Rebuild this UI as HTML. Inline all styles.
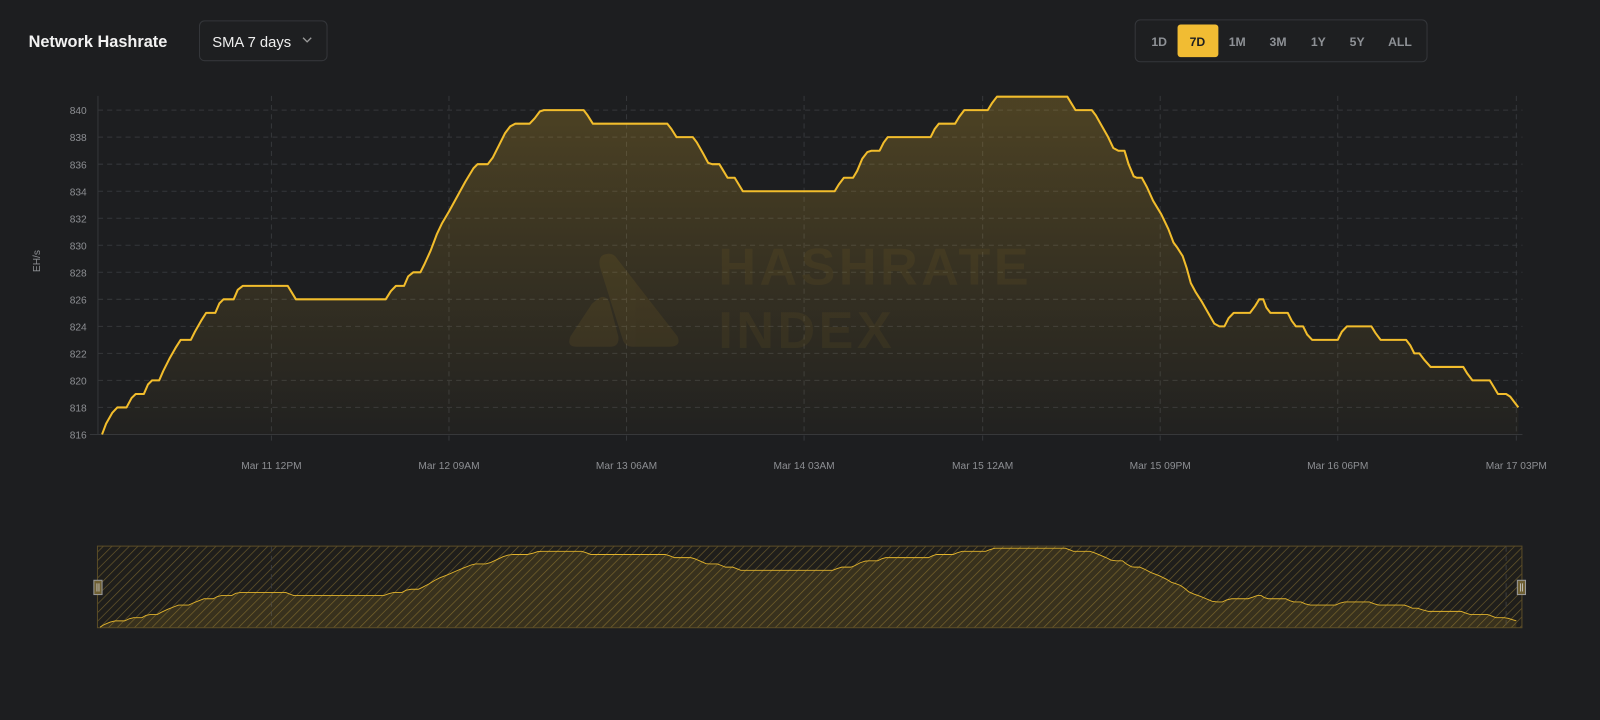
<!DOCTYPE html>
<html><head><meta charset="utf-8"><style>
html,body{margin:0;padding:0;background:#1d1e20;width:1600px;height:720px;overflow:hidden}
svg{display:block;font-family:"Liberation Sans",sans-serif}
</style></head><body>
<svg width="1600" height="720" viewBox="0 0 1568 706" preserveAspectRatio="none" xmlns="http://www.w3.org/2000/svg">
<defs>
<linearGradient id="g" x1="0" y1="108" x2="0" y2="426" gradientUnits="userSpaceOnUse">
<stop offset="0" stop-color="#f0bd2f" stop-opacity="0.22"/>
<stop offset="1" stop-color="#f0bd2f" stop-opacity="0.02"/>
</linearGradient>
<pattern id="h" width="6" height="6" patternUnits="userSpaceOnUse" patternTransform="rotate(45)">
<rect width="6" height="6" fill="#1f1e1b"/>
<line x1="0" y1="0" x2="0" y2="6" stroke="#6b5a2c" stroke-width="1.3"/>
</pattern>
</defs>

<text x="28" y="46" font-size="16" font-weight="bold" fill="#f2f2f2">Network Hashrate</text>
<rect x="195.5" y="20.5" width="125" height="39" rx="5" fill="#1e1f21" stroke="#34363a"/>
<text x="208" y="46" font-size="14.5" fill="#eeeeee">SMA 7 days</text>
<path d="M297 37 L301 41 L305 37" fill="none" stroke="#9a9a9a" stroke-width="1.3"/>

<rect x="1112.5" y="19.5" width="286" height="41" rx="5" fill="#1e1f21" stroke="#34363a"/>
<rect x="1154" y="24" width="40" height="32" rx="3" fill="#f1bc33"/>
<g font-size="12" font-weight="bold" fill="#8e9196" text-anchor="middle">
<text x="1136" y="45">1D</text>
<text x="1173.5" y="45" fill="#1d1e20">7D</text>
<text x="1212.5" y="45">1M</text>
<text x="1252.5" y="45">3M</text>
<text x="1292" y="45">1Y</text>
<text x="1330" y="45">5Y</text>
<text x="1372" y="45">ALL</text>
</g>

<g stroke="#35373a" stroke-width="1" stroke-dasharray="5,4">
<line x1="96" y1="108" x2="1492" y2="108"/><line x1="96" y1="134.5" x2="1492" y2="134.5"/>
<line x1="96" y1="161" x2="1492" y2="161"/><line x1="96" y1="187.5" x2="1492" y2="187.5"/>
<line x1="96" y1="214" x2="1492" y2="214"/><line x1="96" y1="240.5" x2="1492" y2="240.5"/>
<line x1="96" y1="267" x2="1492" y2="267"/><line x1="96" y1="293.5" x2="1492" y2="293.5"/>
<line x1="96" y1="320" x2="1492" y2="320"/><line x1="96" y1="346.5" x2="1492" y2="346.5"/>
<line x1="96" y1="373" x2="1492" y2="373"/><line x1="96" y1="399.5" x2="1492" y2="399.5"/>
<line x1="266" y1="94" x2="266" y2="434"/><line x1="440" y1="94" x2="440" y2="434"/>
<line x1="614" y1="94" x2="614" y2="434"/><line x1="788" y1="94" x2="788" y2="434"/>
<line x1="963" y1="94" x2="963" y2="434"/><line x1="1137" y1="94" x2="1137" y2="434"/>
<line x1="1311" y1="94" x2="1311" y2="434"/><line x1="1486" y1="94" x2="1486" y2="434"/>
</g>
<g stroke="#35373a"><line x1="96" y1="94" x2="96" y2="426"/><line x1="88" y1="426" x2="1492" y2="426"/></g>
<g font-size="10" fill="#8d8f93" text-anchor="end">
<text x="85" y="112">840</text><text x="85" y="138.5">838</text><text x="85" y="165">836</text>
<text x="85" y="191.5">834</text><text x="85" y="218">832</text><text x="85" y="244.5">830</text>
<text x="85" y="271">828</text><text x="85" y="297.5">826</text><text x="85" y="324">824</text>
<text x="85" y="350.5">822</text><text x="85" y="377">820</text><text x="85" y="403.5">818</text>
<text x="85" y="430">816</text>
</g>
<text x="0" y="0" font-size="10" fill="#8d8f93" text-anchor="middle" transform="translate(39,256) rotate(-90)">EH/s</text>
<g font-size="10" fill="#8d8f93" text-anchor="middle">
<text x="266" y="460">Mar 11 12PM</text><text x="440" y="460">Mar 12 09AM</text>
<text x="614" y="460">Mar 13 06AM</text><text x="788" y="460">Mar 14 03AM</text>
<text x="963" y="460">Mar 15 12AM</text><text x="1137" y="460">Mar 15 09PM</text>
<text x="1311" y="460">Mar 16 06PM</text><text x="1486" y="460">Mar 17 03PM</text>
</g>

<path id="mainArea" fill="url(#g)" stroke="none" d=""/>

<g fill="#f0bd2f" opacity="0.07">
<path d="M591 250 Q600 246 605 254 L664 330 Q668 340 656 340 L620 340 Q612 340 610 332 L588 262 Q586 253 591 250 Z"/>
<path d="M586 293 Q593 288 597 296 L606 330 Q607 340 598 340 L565 340 Q555 340 559 330 L580 298 Z"/>
</g>
<g font-size="51" font-weight="bold" fill="#f0bd2f" opacity="0.05" letter-spacing="3.5">
<text x="704" y="279">HASHRATE</text>
<text x="704" y="341">INDEX</text>
</g>

<path id="mainLine" fill="none" stroke="#f2bd2c" stroke-width="2" stroke-linejoin="round" d=""/>

<rect x="95.5" y="535.5" width="1396" height="80" fill="url(#h)" stroke="#5a4c27"/>
<g stroke="#3a3b3e" stroke-dasharray="5,4"><line x1="266" y1="536" x2="266" y2="615"/><line x1="1476" y1="536" x2="1476" y2="615"/></g>
<path id="navArea" fill="#f0bd2f" fill-opacity="0.12" stroke="none" d=""/>
<path id="navLine" fill="none" stroke="#e0b22c" stroke-width="0.9" d=""/>
<rect x="92" y="569" width="8" height="14" fill="#6e5f33" stroke="#9a9a9a"/>
<line x1="95" y1="572" x2="95" y2="580" stroke="#ccc" stroke-width="0.8"/><line x1="97" y1="572" x2="97" y2="580" stroke="#ccc" stroke-width="0.8"/>
<rect x="1487" y="569" width="8" height="14" fill="#6e5f33" stroke="#9a9a9a"/>
<line x1="1490" y1="572" x2="1490" y2="580" stroke="#ccc" stroke-width="0.8"/><line x1="1492" y1="572" x2="1492" y2="580" stroke="#ccc" stroke-width="0.8"/>
</svg>
<script>
var pts="100,816 104,816.8 110,817.6 115,818 124,818 129,818.7 133,819 141,819 145,819.7 149,820 156,820 160,820.7 166,821.6 172,822.4 177,823 187,823 191,823.6 197,824.4 202,825 211,825 215,825.7 219,826 229,826 233,826.7 238,827 282,827 286,826.5 290,826 378,826 383,826.6 388,827 396,827 400,827.7 405,828 412,828 416,828.6 422,829.6 428,830.8 433,831.6 440,832.5 448,833.6 456,834.7 464,835.7 468,836 478,836 483,836.5 489,837.4 495,838.3 500,838.8 505,839 519,839 524,839.4 529,839.9 533,840 572,840 576,839.6 581,839 654,839 658,838.6 663,838 679,838 683,837.6 689,836.8 694,836.1 698,836 705,836 709,835.5 713,835 720,835 724,834.5 728,834 818,834 822,834.5 827,835 836,835 840,835.5 845,836.4 850,836.9 854,837 862,837 866,837.6 870,838 912,838 916,838.6 920,839 936,839 940,839.5 945,840 968,840 972,840.5 977,841 1046,841 1050,840.5 1054,840 1070,840 1074,839.6 1080,838.8 1086,838 1091,837.2 1096,837 1102,837 1106,836 1111,835.1 1114,835 1119,835 1124,834.3 1130,833.3 1138,832.3 1145,831.2 1150,830.2 1154,829.8 1159,829.2 1163,828.3 1167,827.2 1172,826.5 1178,825.8 1184,825 1190,824.2 1195,824 1200,824 1204,824.6 1209,825 1225,825 1230,825.5 1234,826 1238,826 1241,825.4 1245,825 1262,825 1266,824.4 1270,824 1277,824 1281,823.4 1286,823 1311,823 1315,823.6 1320,824 1344,824 1348,823.5 1353,823 1378,823 1382,822.6 1386,822 1391,822 1396,821.5 1402,821 1434,821 1438,820.5 1443,820 1460,820 1464,819.5 1468,819 1476,819 1480,818.8 1485,818.3 1488,818".split(" ").map(function(s){var a=s.split(",");return [+a[0],+a[1]];});
function build(base,scale,dx){
  var d="";pts.forEach(function(p,i){d+=(i?"L":"M")+(p[0]+dx).toFixed(1)+" "+(base-(p[1]-816)*scale).toFixed(1);});
  return d;
}
var l=build(426,13.25,0);
document.getElementById("mainLine").setAttribute("d",l);
document.getElementById("mainArea").setAttribute("d",l+"L1488 426L100 426Z");
var n=build(615,3.1,-2);
document.getElementById("navLine").setAttribute("d",n);
document.getElementById("navArea").setAttribute("d",n+"L1486 615L98 615Z");
</script>
</body></html>
